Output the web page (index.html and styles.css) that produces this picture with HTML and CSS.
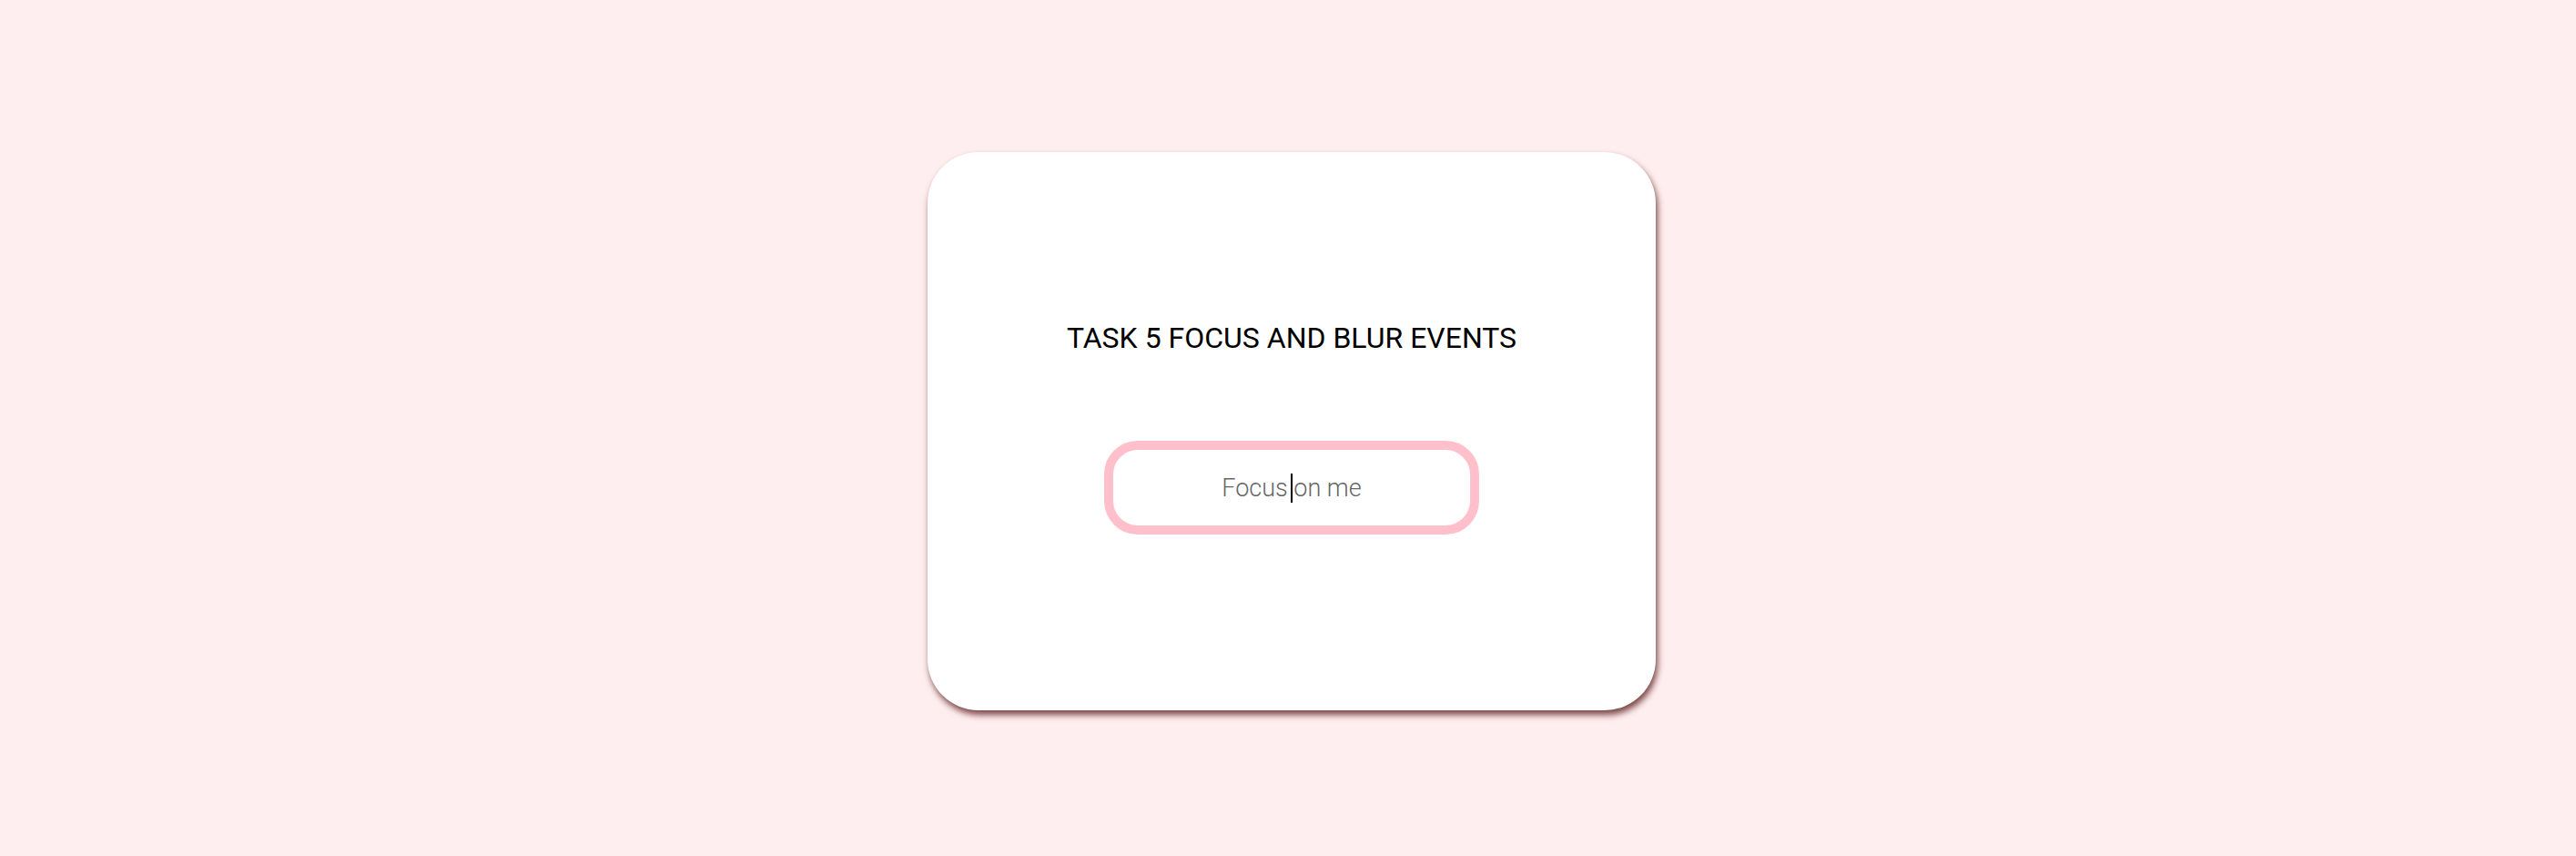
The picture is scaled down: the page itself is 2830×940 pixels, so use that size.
FILE: index.html
```html
<!DOCTYPE html>
<html lang="en">
<head>
<meta charset="utf-8">
<title>Task 5 Focus and Blur Events</title>
<link rel="stylesheet" href="styles.css">
</head>
<body>
<main class="page">
  <section class="card">
    <h1 class="title">TASK 5 FOCUS AND BLUR EVENTS</h1>
    <div class="field">
      <input class="field-input" type="text" placeholder="Focus on me">
      <span class="caret"></span>
    </div>
  </section>
</main>
</body>
</html>
```
FILE: styles.css
```css
html, body {
  margin: 0;
  padding: 0;
}
body {
  background: #ffeeef;
  font-family: Roboto, "Liberation Sans", sans-serif;
  width: 2830px;
  height: 940px;
  overflow: hidden;
}
.page {
  display: flex;
  justify-content: center;
  align-items: flex-start;
  padding: 167px 0 0 8px;
  box-sizing: border-box;
  height: 940px;
}
.card {
  width: 800px;
  height: 613px;
  box-sizing: border-box;
  background: #ffffff;
  border-radius: 56px;
  box-shadow: 2px 5px 7px rgba(80, 15, 15, 0.75);
  display: flex;
  flex-direction: column;
  align-items: center;
  padding-top: 185px;
}
.title {
  margin: 0;
  font-size: 32px;
  font-weight: 400;
  line-height: 38px;
  color: #000;
  letter-spacing: 0;
}
.field {
  position: relative;
  margin-top: 94px;
  width: 412px;
  height: 103px;
}
.field-input {
  width: 100%;
  height: 100%;
  box-sizing: border-box;
  border: 10px solid #ffc0cb;
  border-radius: 37px;
  background: #fff;
  outline: none;
  text-align: center;
  font-family: Roboto, "Liberation Sans", sans-serif;
  font-size: 27px;
  font-weight: 300;
  color: #000;
  caret-color: transparent;
  padding: 0;
  margin: 0;
}
.field-input::placeholder {
  color: #666666;
  opacity: 1;
}
.caret {
  position: absolute;
  left: 205px;
  top: 36px;
  width: 2px;
  height: 32px;
  background: #000;
}
```
